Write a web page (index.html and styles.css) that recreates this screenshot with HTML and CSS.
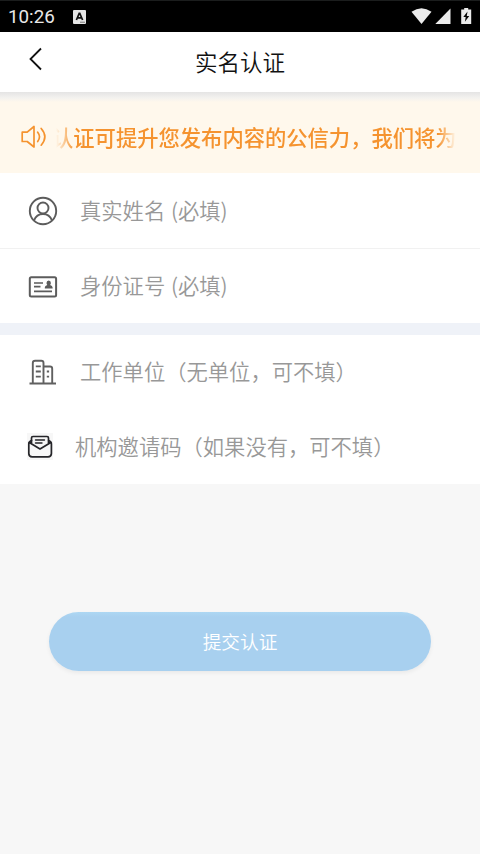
FILE: index.html
```html
<!DOCTYPE html>
<html lang="zh-CN">
<head>
<meta charset="utf-8">
<meta name="viewport" content="width=device-width, initial-scale=1">
<title>实名认证</title>
<link rel="stylesheet" href="styles.css">
</head>
<body>
<div class="status">
  <span class="time">10:26</span>
  <svg class="app" width="13" height="14" viewBox="0 0 13 14"><rect width="13" height="14" rx="1" fill="#e6e6e6"/><path d="M3.4 10 6.2 3.4h.6L9.6 10M4.6 7.8h3.8" fill="none" stroke="#111" stroke-width="1.7"/><path d="M7 12.2h5" stroke="#777"/></svg>
  <svg class="signals" width="62" height="18" viewBox="0 0 62 18"><path d="M.5 3.7Q10.500-3.300 20.500 3.700L10.500 16Z" fill="#ececec"/><path d="M39.500.5V16H24.300Z" fill="#ececec"/><path d="M50.200 1.500h3V0h4v1.500h3V16h-10Z" fill="#ececec"/><path d="M56.500 3.500 52.300 9h2.400l-.8 4.800L58.300 8h-2.500Z" fill="#080808"/></svg>
</div>
<header class="header">
  <svg class="back" width="16" height="24" viewBox="0 0 16 24"><path d="M13 1.500 2.500 12 13 22.500" fill="none" stroke="#111" stroke-width="1.800"/></svg>
  <h1>实名认证</h1>
</header>
<section class="notice">
  <svg class="speaker" width="26" height="24" viewBox="0 0 26 24" fill="none" stroke="#f5932f" stroke-width="1.700" stroke-linejoin="round" stroke-linecap="round"><path d="M1.200 7.200h5L13 1.500V22L6.200 16.500h-5ZM16.700 7.200Q20.300 11.800 16.700 16.500M20.200 3.500Q27.500 11.800 20.200 20.200"/></svg>
  <div class="ticker"><span>认证可提升您发布内容的公信力，我们将为</span></div>
</section>
<main>
  <div class="field name">
    <svg width="30" height="30" viewBox="0 0 30 30" fill="none" stroke="#5c5c5c" stroke-width="1.900"><circle cx="15" cy="15" r="13.200"/><circle cx="15" cy="12" r="5.500"/><path d="M6 24.500Q8.500 18 15 18t9 6.500"/></svg>
    <span>真实姓名 (必填)</span>
  </div>
  <div class="field identity">
    <svg width="30" height="30" viewBox="0 0 30 30" fill="none" stroke="#5c5c5c" stroke-width="1.700"><rect x="1.800" y="5.300" width="26.300" height="19.300" rx="1.500" stroke-width="2"/><path d="M6 11h9M6 14.700h6.500M6 19.300h18"/><path d="M16.800 16.500v-1q0-2 2.500-2.500-.8-1-.8-2 0-2.500 2.200-2.500t2.200 2.500q0 1-.8 2 2.500.5 2.500 2.500v1Z" fill="#5c5c5c" stroke="none"/></svg>
    <span>身份证号 (必填)</span>
  </div>
  <div class="divider"></div>
  <div class="field company">
    <svg width="30" height="30" viewBox="0 0 30 30" fill="none" stroke="#606060" stroke-width="1.900"><path d="M1.500 26.500h26.500M4.800 26V6q0-2.300 2.300-2.300h6.200q2.200 0 2.200 2.300v20M15.500 9.500H22q2.200 0 2.200 2.200V26"/><path d="M7.800 9.300h5M7.800 14.500h5M7.800 19.700h5M18.800 14.500h2.300M18.800 19.700h2.300" stroke-width="1.800"/></svg>
    <span>工作单位（无单位，可不填）</span>
  </div>
  <div class="field invite">
    <svg width="26" height="27" viewBox="0 0 26 27" fill="none" stroke="#252529" stroke-width="1.700" stroke-linejoin="round" stroke-linecap="round"><path d="M0 0h26v27H0Z" fill="#f7f7f7" stroke="none"/><path d="M4.500 7.500Q1.800 8.500 1.800 11v9.500q0 3.300 3.300 3.300h16q3.300 0 3.300-3.300V11q0-2.500-2.700-3.500"/><path d="M4.500 10V5q0-1.500 1.500-1.500h14q1.500 0 1.500 1.500v5M2.300 9.500 13 16l10.800-6.500"/><path d="M8.500 7h9M8.500 10h6.500" stroke-width="1.400"/></svg>
    <span>机构邀请码（如果没有，可不填）</span>
  </div>
</main>
<button class="submit" type="button">提交认证</button>
</body>
</html>
```
FILE: styles.css
```css
* {
  box-sizing: border-box;
}

body {
  margin: 0;
  min-height: 854px;
  background: #f7f7f7;
  font-family: "Noto Sans CJK SC", sans-serif;
}

svg {
  display: block;
  flex: none;
}

.status {
  display: flex;
  align-items: center;
  height: 32px;
  padding: 0 7px 0 8px;
  background: #000;
  border-top: 1px solid #1b1d1d;
}

.time {
  width: 65px;
  color: #e8e8e8;
  font: 400 18.800px/30px Roboto, sans-serif;
}

.signals {
  margin-left: auto;
}

.header {
  display: grid;
  grid-template-columns: 60px 1fr 60px;
  height: 60px;
  background: #fff;
}

.back {
  margin: 15px 0 0 28px;
}

h1 {
  margin: 0;
  color: #111;
  font-size: 22.500px;
  font-weight: 350;
  line-height: 58px;
  text-align: center;
}

.notice {
  display: flex;
  align-items: center;
  height: 81px;
  padding: 8px 24px 0 21px;
  background: linear-gradient(#e4e4e4, #f3f2ef 6px, #fff8ec 10px);
}

.ticker {
  flex: 1;
  height: 34px;
  margin-left: 9px;
  overflow: hidden;
  mask-image: linear-gradient(90deg, transparent, #000 18px, #000 calc(100% - 18px), transparent);
}

.ticker span {
  display: block;
  margin-left: -4px;
  color: #f5932f;
  font-size: 21.300px;
  font-weight: 500;
  line-height: 34px;
  white-space: nowrap;
}

.field {
  display: flex;
  align-items: center;
  height: 75px;
  padding-left: 28px;
  background: #fff;
  color: #989898;
  font-size: 21.300px;
  font-weight: 350;
  line-height: 32px;
  white-space: nowrap;
}

.field span {
  margin: 0 0 2px 22px;
  word-spacing: 1px;
}

.name {
  height: 76px;
  border-bottom: 1px solid #f1f1f1;
}

.identity {
  height: 74px;
}

.identity svg {
  margin-top: 1px;
}

.divider {
  height: 12px;
  background: #eff2f8;
}

.company {
  height: 74px;
}

.invite {
  padding-left: 27px;
}

.submit {
  display: block;
  width: 382px;
  height: 59px;
  margin: 128px auto 0;
  padding: 0 0 2px;
  border: 0;
  border-radius: 30px;
  background: linear-gradient(#add7f3, #a8d0ef 5px);
  box-shadow: 0 2px 4px rgba(0, 0, 0, 0.06);
  color: #fff;
  font: 350 18.700px/57px "Noto Sans CJK SC", sans-serif;
}
```
